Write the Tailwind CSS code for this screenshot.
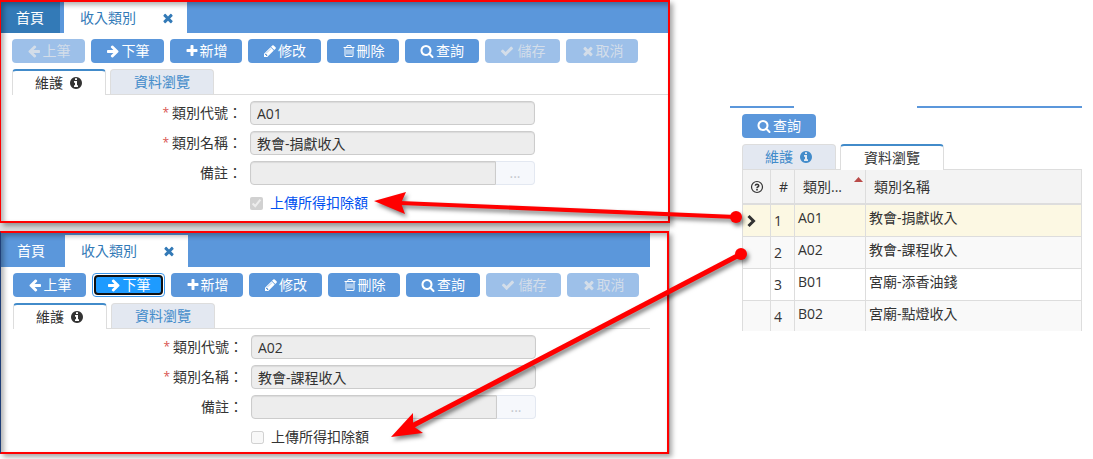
<!DOCTYPE html>
<html lang="zh-Hant">
<head>
  <meta charset="UTF-8" />
  <meta name="viewport" content="width=device-width, initial-scale=1" />
  <title>收入類別</title>
  <script src="https://cdn.jsdelivr.net/npm/@tailwindcss/browser@4"></script>
</head>
<body class="relative flex items-start gap-[60px] pr-[11px] min-h-screen bg-white text-[#333] text-sm leading-5 font-['Open_Sans','Noto_Sans_CJK_TC',sans-serif]">

  <!-- icons -->
  <svg class="hidden" xmlns="http://www.w3.org/2000/svg">
    <symbol id="i-left" viewBox="0 0 1792 1792"><path d="M1664 896v128q0 53-32.5 90.5t-84.5 37.5h-704l293 294q38 36 38 90t-38 90l-75 76q-37 37-90 37-52 0-91-37l-651-652q-37-37-37-90 0-52 37-91l651-650q38-38 91-38 52 0 90 38l75 74q38 38 38 91t-38 91l-293 293h704q52 0 84.500 37.500t32.500 90.500z"/></symbol>
    <symbol id="i-right" viewBox="0 0 1792 1792"><path d="M1600 960q0 54-37 91l-651 651q-39 37-91 37-51 0-90-37l-75-75q-38-38-38-91t38-91l293-293h-704q-52 0-84.500-37.500t-32.500-90.500v-128q0-53 32.500-90.500t84.500-37.500h704l-293-294q-38-36-38-90t38-90l75-75q38-38 90-38 53 0 91 38l651 651q37 35 37 90z"/></symbol>
    <symbol id="i-plus" viewBox="0 0 1792 1792"><path d="M1600 736v192q0 40-28 68t-68 28h-416v416q0 40-28 68t-68 28h-192q-40 0-68-28t-28-68v-416h-416q-40 0-68-28t-28-68v-192q0-40 28-68t68-28h416v-416q0-40 28-68t68-28h192q40 0 68 28t28 68v416h416q40 0 68 28t28 68z"/></symbol>
    <symbol id="i-pencil" viewBox="0 0 1792 1792"><path d="M491 1536l91-91-235-235-91 91v107h128v128h107zm523-928q0-22-22-22-10 0-17 7l-542 542q-7 7-7 17 0 22 22 22 10 0 17-7l542-542q7-7 7-17zm-54-192l416 416-832 832h-416v-416zm683 96q0 53-37 90l-166 166-416-416 166-165q36-38 90-38 53 0 91 38l235 234q37 39 37 91z"/></symbol>
    <symbol id="i-trash" viewBox="0 0 1792 1792"><path d="M704 736v576q0 14-9 23t-23 9h-64q-14 0-23-9t-9-23v-576q0-14 9-23t23-9h64q14 0 23 9t9 23zm256 0v576q0 14-9 23t-23 9h-64q-14 0-23-9t-9-23v-576q0-14 9-23t23-9h64q14 0 23 9t9 23zm256 0v576q0 14-9 23t-23 9h-64q-14 0-23-9t-9-23v-576q0-14 9-23t23-9h64q14 0 23 9t9 23zm128 724v-948h-896v948q0 22 7 40.500t14.500 27 10.500 8.500h832q3 0 10.500-8.500t14.500-27 7-40.500zm-672-1076h448l-48-117q-7-9-17-11h-317q-10 2-17 11zm928 32v64q0 14-9 23t-23 9h-96v948q0 83-47 143.500t-113 60.500h-832q-66 0-113-58.500t-47-141.500v-952h-96q-14 0-23-9t-9-23v-64q0-14 9-23t23-9h309l70-167q15-37 54-63t79-26h320q40 0 79 26t54 63l70 167h309q14 0 23 9t9 23z"/></symbol>
    <symbol id="i-search" viewBox="0 0 1792 1792"><path d="M1216 832q0-185-131.500-316.500t-316.500-131.500-316.500 131.500-131.500 316.500 131.500 316.500 316.500 131.500 316.500-131.500 131.500-316.500zm512 832q0 52-38 90t-90 38q-54 0-90-38l-343-342q-179 124-399 124-143 0-273.500-55.500t-225-150-150-225-55.500-273.500 55.500-273.500 150-225 225-150 273.500-55.500 273.500 55.500 225 150 150 225 55.500 273.500q0 220-124 399l343 343q37 37 37 90z"/></symbol>
    <symbol id="i-check" viewBox="0 0 1792 1792"><path d="M1671 566q0 40-28 68l-724 724-136 136q-28 28-68 28t-68-28l-136-136-362-362q-28-28-28-68t28-68l136-136q28-28 68-28t68 28l294 295 656-657q28-28 68-28t68 28l136 136q28 28 28 68z"/></symbol>
    <symbol id="i-times" viewBox="0 0 1792 1792"><path d="M1490 1322q0 40-28 68l-136 136q-28 28-68 28t-68-28l-294-294-294 294q-28 28-68 28t-68-28l-136-136q-28-28-28-68t28-68l294-294-294-294q-28-28-28-68t28-68l136-136q28-28 68-28t68 28l294 294 294-294q28-28 68-28t68 28l136 136q28 28 28 68t-28 68l-294 294 294 294q28 28 28 68z"/></symbol>
    <symbol id="i-info" viewBox="0 0 1792 1792"><path d="M1152 1376v-160q0-14-9-23t-23-9h-96v-512q0-14-9-23t-23-9h-320q-14 0-23 9t-9 23v160q0 14 9 23t23 9h96v320h-96q-14 0-23 9t-9 23v160q0 14 9 23t23 9h448q14 0 23-9t9-23zm-128-896v-160q0-14-9-23t-23-9h-192q-14 0-23 9t-9 23v160q0 14 9 23t23 9h192q14 0 23-9t9-23zm640 416q0 209-103 385.500t-279.500 279.500-385.500 103-385.500-103-279.500-279.500-103-385.500 103-385.500 279.500-279.500 385.500-103 385.500 103 279.500 279.500 103 385.500z"/></symbol>
    <symbol id="i-help" viewBox="0 0 14 14"><circle cx="7" cy="7" r="5.500" fill="none" stroke="currentColor" stroke-width="1.200"/><path d="M5.200 5.600Q5.500 4.200 7 4.200Q8.800 4.300 8.800 5.700Q8.700 6.600 7.700 7Q7 7.300 7 8.200" fill="none" stroke="currentColor" stroke-width="1.500"/><path d="M6.200 9h1.600v1.500H6.200z"/></symbol>
    <symbol id="i-chevron" viewBox="0 0 14 14"><path d="M2.500 2L7.500 7L2.500 12" fill="none" stroke="currentColor" stroke-width="3"/></symbol>
  </svg>

  <main class="flex-1 min-w-0 bg-[#dedede]">

    <!-- record A01 -->
    <section class="relative bg-white border-2 border-l border-[#f00] shadow-[3px_3px_5px_rgba(0,0,0,.35)] after:absolute after:inset-0 after:pointer-events-none after:shadow-[inset_3px_3px_5px_rgba(0,0,0,.3)]">
      <nav class="flex gap-1 h-[31px] bg-[#5b97db]">
        <a href="#" class="flex items-center w-[59px] pl-[15px] bg-[#337ab7] text-white">首頁</a>
        <a href="#" class="flex items-center justify-between w-[123px] pl-4 pr-3 bg-white text-[#337ab7]">收入類別 <svg class="size-3.5 fill-current"><use href="#i-times"/></svg></a>
      </nav>
      <div class="flex gap-1.5 pl-[11px] pt-1.5">
        <button disabled class="flex items-center justify-center gap-0.5 w-[73px] h-6 rounded bg-[#9dc0e9] text-[#d3dde9]"><svg class="size-3.5 fill-current"><use href="#i-left"/></svg>上筆</button>
        <button class="flex items-center justify-center gap-0.5 w-[73px] h-6 rounded bg-[#5b97db] text-white"><svg class="size-3.5 fill-current"><use href="#i-right"/></svg>下筆</button>
        <button class="flex items-center justify-center gap-px w-[72px] h-6 rounded bg-[#5b97db] text-white"><svg class="size-3.5 fill-current"><use href="#i-plus"/></svg>新增</button>
        <button class="flex items-center justify-center gap-px w-[73px] h-6 rounded bg-[#5b97db] text-white"><svg class="size-3.5 fill-current"><use href="#i-pencil"/></svg>修改</button>
        <button class="flex items-center justify-center gap-px w-[72px] h-6 rounded bg-[#5b97db] text-white"><svg class="size-3.5 fill-current"><use href="#i-trash"/></svg>刪除</button>
        <button class="flex items-center justify-center gap-0.5 w-[74px] h-6 rounded bg-[#5b97db] text-white"><svg class="size-3.5 fill-current"><use href="#i-search"/></svg>查詢</button>
        <button disabled class="flex items-center justify-center gap-1 w-[75px] h-6 rounded bg-[#9dc0e9] text-[#d3dde9]"><svg class="size-3.5 fill-current"><use href="#i-check"/></svg>儲存</button>
        <button disabled class="flex items-center justify-center gap-px w-[72px] h-6 rounded bg-[#9dc0e9] text-[#d3dde9]"><svg class="size-3.5 fill-current"><use href="#i-times"/></svg>取消</button>
      </div>
      <div class="flex gap-1 ml-[11px] mt-1.5 h-[26px] border-b border-[#ddd]">
        <a href="#" class="flex items-center justify-center gap-1.5 w-[94px] h-[26px] bg-white border border-[#ddd] border-t-2 border-t-[#428bca] border-b-0 rounded-t">維護 <svg class="size-3.5 fill-current"><use href="#i-info"/></svg></a>
        <a href="#" class="flex items-center justify-center w-[104px] h-[25px] bg-[#e3e8f1] border border-[#ddd] border-b-0 rounded-t text-[#428bca]">資料瀏覽</a>
      </div>
      <form class="grid grid-cols-[241px_285px] gap-x-2 gap-y-1.5 pt-1.5 pb-1.5">
        <label for="code1" class="flex justify-end gap-[3px] leading-6"><span class="text-xs leading-6 text-[#d9534f]">*</span>類別代號：</label>
        <input id="code1" value="A01" readonly class="h-6 px-1.5 rounded border border-[#ccc] bg-[#ededed] shadow-[inset_0_1px_1px_rgba(0,0,0,.08)]" />
        <label for="name1" class="flex justify-end gap-[3px] leading-6"><span class="text-xs leading-6 text-[#d9534f]">*</span>類別名稱：</label>
        <input id="name1" value="教會-捐獻收入" readonly class="h-6 px-1.5 rounded border border-[#ccc] bg-[#ededed] shadow-[inset_0_1px_1px_rgba(0,0,0,.08)]" />
        <label for="memo1" class="text-right leading-6">備註：</label>
        <div class="flex">
          <input id="memo1" readonly class="flex-1 min-w-0 h-6 px-1.5 rounded-l border border-[#ccc] bg-[#ededed] shadow-[inset_0_1px_1px_rgba(0,0,0,.08)]" />
          <button type="button" disabled class="w-[39px] h-6 rounded-r border border-l-0 border-[#e3e8f1] bg-[#f6f8fc] text-[#c4c7cc] leading-5">...</button>
        </div>
        <label class="col-start-2 flex items-center gap-[7px] h-6 text-[#0050f0]"><input type="checkbox" checked disabled class="size-[13px]" /> 上傳所得扣除額</label>
      </form>
    </section>

    <!-- record A02 -->
    <section class="relative mt-2 mr-px bg-white border-2 border-l border-[#f00] border-l-[#1f3f78] shadow-[3px_3px_5px_rgba(0,0,0,.35)] after:absolute after:inset-0 after:pointer-events-none after:shadow-[inset_3px_3px_5px_rgba(0,0,0,.3)]">
      <nav class="flex gap-1 h-[34px] mr-[17px] pt-0.5 bg-[#5b97db]">
        <a href="#" class="flex items-center w-[60px] pl-4 text-white">首頁</a>
        <a href="#" class="flex items-center justify-between w-[123px] pl-4 pr-3 bg-white text-[#337ab7]">收入類別 <svg class="size-3.5 fill-current"><use href="#i-times"/></svg></a>
      </nav>
      <div class="flex gap-1.5 pl-3 pt-1.5">
        <button class="flex items-center justify-center gap-0.5 w-[73px] h-6 rounded bg-[#5b97db] text-white"><svg class="size-3.5 fill-current"><use href="#i-left"/></svg>上筆</button>
        <button class="p-px w-[73px] h-6 rounded border border-[#3a95ea] text-white"><span class="flex items-center justify-center gap-0.5 h-5 rounded border-2 border-[#101010] bg-[#1e9bff]"><svg class="size-3.5 fill-current"><use href="#i-right"/></svg>下筆</span></button>
        <button class="flex items-center justify-center gap-px w-[72px] h-6 rounded bg-[#5b97db] text-white"><svg class="size-3.5 fill-current"><use href="#i-plus"/></svg>新增</button>
        <button class="flex items-center justify-center gap-px w-[73px] h-6 rounded bg-[#5b97db] text-white"><svg class="size-3.5 fill-current"><use href="#i-pencil"/></svg>修改</button>
        <button class="flex items-center justify-center gap-px w-[72px] h-6 rounded bg-[#5b97db] text-white"><svg class="size-3.5 fill-current"><use href="#i-trash"/></svg>刪除</button>
        <button class="flex items-center justify-center gap-0.5 w-[74px] h-6 rounded bg-[#5b97db] text-white"><svg class="size-3.5 fill-current"><use href="#i-search"/></svg>查詢</button>
        <button disabled class="flex items-center justify-center gap-1 w-[75px] h-6 rounded bg-[#9dc0e9] text-[#d3dde9]"><svg class="size-3.5 fill-current"><use href="#i-check"/></svg>儲存</button>
        <button disabled class="flex items-center justify-center gap-px w-[72px] h-6 rounded bg-[#9dc0e9] text-[#d3dde9]"><svg class="size-3.5 fill-current"><use href="#i-times"/></svg>取消</button>
      </div>
      <div class="flex gap-1 ml-3 mr-[17px] mt-1.5 h-[26px] border-b border-[#ddd]">
        <a href="#" class="flex items-center justify-center gap-1.5 w-[94px] h-[26px] bg-white border border-[#ddd] border-t-2 border-t-[#428bca] border-b-0 rounded-t">維護 <svg class="size-3.5 fill-current"><use href="#i-info"/></svg></a>
        <a href="#" class="flex items-center justify-center w-[104px] h-[25px] bg-[#e3e8f1] border border-[#ddd] border-b-0 rounded-t text-[#428bca]">資料瀏覽</a>
      </div>
      <form class="grid grid-cols-[242px_285px] gap-x-2 gap-y-1.5 pt-1.5 pb-[3px]">
        <label for="code2" class="flex justify-end gap-[3px] leading-6"><span class="text-xs leading-6 text-[#d9534f]">*</span>類別代號：</label>
        <input id="code2" value="A02" readonly class="h-6 px-1.5 rounded border border-[#ccc] bg-[#ededed] shadow-[inset_0_1px_1px_rgba(0,0,0,.08)]" />
        <label for="name2" class="flex justify-end gap-[3px] leading-6"><span class="text-xs leading-6 text-[#d9534f]">*</span>類別名稱：</label>
        <input id="name2" value="教會-課程收入" readonly class="h-6 px-1.5 rounded border border-[#ccc] bg-[#ededed] shadow-[inset_0_1px_1px_rgba(0,0,0,.08)]" />
        <label for="memo2" class="text-right leading-6">備註：</label>
        <div class="flex">
          <input id="memo2" readonly class="flex-1 min-w-0 h-6 px-1.5 rounded-l border border-[#ccc] bg-[#ededed] shadow-[inset_0_1px_1px_rgba(0,0,0,.08)]" />
          <button type="button" disabled class="w-[39px] h-6 rounded-r border border-l-0 border-[#e3e8f1] bg-[#f6f8fc] text-[#c4c7cc] leading-5">...</button>
        </div>
        <label class="col-start-2 flex items-center gap-[7px] h-6"><input type="checkbox" disabled class="size-[13px]" /> 上傳所得扣除額</label>
      </form>
    </section>
  </main>

  <!-- data list -->
  <aside class="w-[352px] pt-[106px]">
    <div class="flex gap-[123px] h-0.5">
      <span class="w-16 bg-[#5b97db]"></span>
      <span class="flex-1 bg-[#5b97db]"></span>
    </div>
    <div class="pl-3 pt-1.5">
      <button class="flex items-center justify-center gap-0.5 w-[74px] h-6 rounded bg-[#5b97db] text-white"><svg class="size-3.5 fill-current"><use href="#i-search"/></svg>查詢</button>
      <div class="flex gap-1 mt-1.5 h-[26px] border-b border-[#ddd]">
        <a href="#" class="flex items-center justify-center gap-1.5 w-[94px] h-[25px] bg-[#e3e8f1] border border-[#ddd] border-b-0 rounded-t text-[#428bca]">維護 <svg class="size-3.5 fill-current"><use href="#i-info"/></svg></a>
        <a href="#" class="flex items-center justify-center w-[104px] h-[26px] bg-white border border-[#ddd] border-t-2 border-t-[#428bca] border-b-0 rounded-t">資料瀏覽</a>
      </div>
      <table class="w-full table-fixed border-separate border-spacing-0 border-l border-[#ddd]">
        <thead class="bg-[#f3f3f3] text-left">
          <tr class="h-[35px]">
            <th class="w-7 pl-[7px] border-r border-b-2 border-[#ddd]"><svg class="size-3.5 fill-current"><use href="#i-help"/></svg></th>
            <th class="w-6 pl-2 font-normal border-r border-b-2 border-[#ddd]">#</th>
            <th class="w-[71px] pl-2 font-normal border-r border-b-2 border-[#ddd]"><div class="flex justify-between pr-0.5">類別... <svg class="w-[9px] h-[5px] fill-[#b94a48]" viewBox="0 0 9 5"><path d="M4.500 0L9 5H0z"/></svg></div></th>
            <th class="pl-2 font-normal border-r border-b-2 border-[#ddd]">類別名稱</th>
          </tr>
        </thead>
        <tbody class="align-top">
          <tr class="h-8 bg-[#fcf8e3]">
            <td class="pl-[3px] pt-[9px] border-r border-b border-[#ddd]"><svg class="size-3.5"><use href="#i-chevron"/></svg></td>
            <td class="pl-[3px] pt-1.5 border-r border-b border-[#ddd]">1</td>
            <td class="pl-[3px] pt-[3px] border-r border-b border-[#ddd]">A01</td>
            <td class="pl-[3px] pt-[3px] border-r border-b border-[#ddd]">教會-捐獻收入</td>
          </tr>
          <tr class="h-8 bg-[#f9f9f9]">
            <td class="border-r border-b border-[#ddd]"></td>
            <td class="pl-[3px] pt-1.5 border-r border-b border-[#ddd]">2</td>
            <td class="pl-[3px] pt-[3px] border-r border-b border-[#ddd]">A02</td>
            <td class="pl-[3px] pt-[3px] border-r border-b border-[#ddd]">教會-課程收入</td>
          </tr>
          <tr class="h-8">
            <td class="border-r border-b border-[#ddd]"></td>
            <td class="pl-[3px] pt-1.5 border-r border-b border-[#ddd]">3</td>
            <td class="pl-[3px] pt-[3px] border-r border-b border-[#ddd]">B01</td>
            <td class="pl-[3px] pt-[3px] border-r border-b border-[#ddd]">宮廟-添香油錢</td>
          </tr>
          <tr class="h-[30px] bg-[#f9f9f9]">
            <td class="border-r border-[#ddd]"></td>
            <td class="pl-[3px] pt-1.5 border-r border-[#ddd]">4</td>
            <td class="pl-[3px] pt-[3px] border-r border-[#ddd]">B02</td>
            <td class="pl-[3px] pt-[3px] border-r border-[#ddd]">宮廟-點燈收入</td>
          </tr>
        </tbody>
      </table>
    </div>
  </aside>

  <!-- arrows from the list rows to the tick boxes -->
  <svg class="absolute left-0 top-0 w-[760px] h-[459px] pointer-events-none drop-shadow-[2px_3px_2px_rgba(0,0,0,.5)]" viewBox="0 0 760 459" fill="#f00" stroke="#f00">
    <path d="M736 217L400 203" stroke-width="4"/>
    <path d="M374 201L406 192L401 203L405 214z" stroke="none"/>
    <circle cx="736" cy="217" r="6" stroke="none"/>
    <path d="M741 254L412 426" stroke-width="5"/>
    <path d="M391 437L413 413L413 426L423 433z" stroke="none"/>
    <circle cx="741" cy="254" r="6" stroke="none"/>
  </svg>

</body>
</html>
